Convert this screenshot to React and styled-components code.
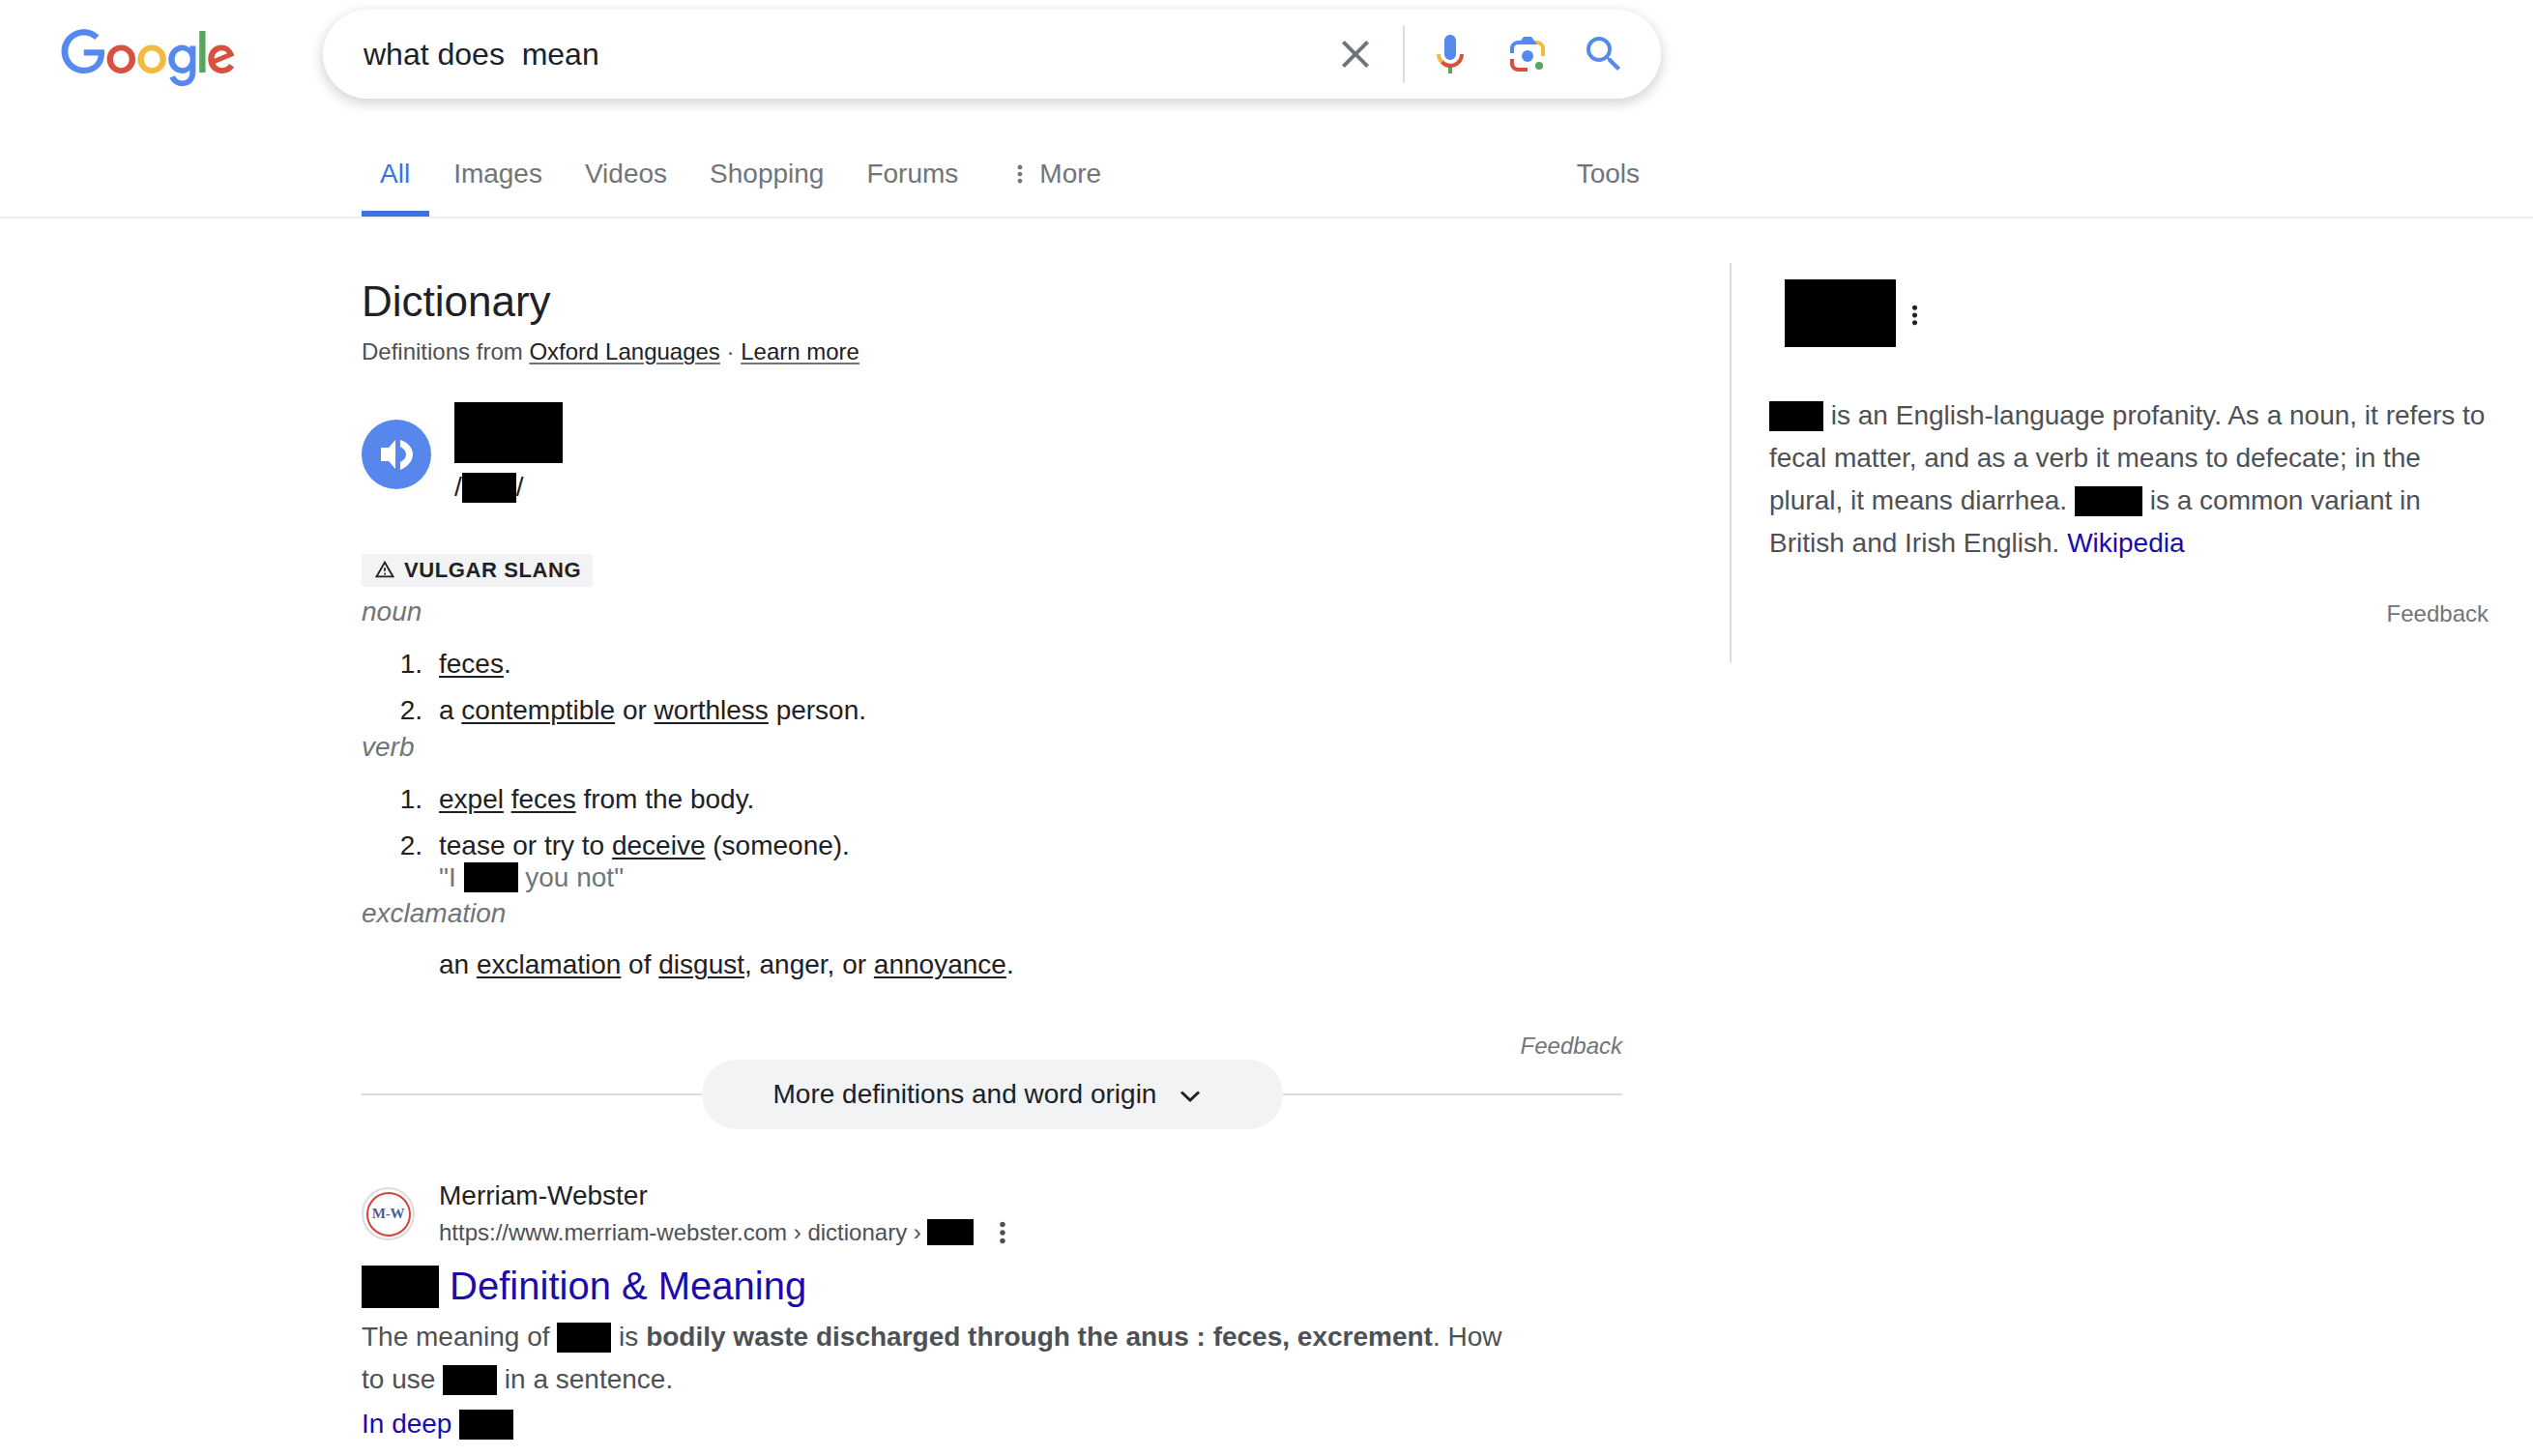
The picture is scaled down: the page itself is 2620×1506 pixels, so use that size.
import React from "react";
import styled, { createGlobalStyle } from "styled-components";

const GlobalStyle = createGlobalStyle`
  html, body { margin: 0; padding: 0; background: #fff; }
  body { font-family: "Liberation Sans", Arial, sans-serif; color: #202124; width: 2620px; height: 1506px; overflow: hidden; }
  * { box-sizing: border-box; }
`;

const Page = styled.div`
  width: 2620px;
  height: 1506px;
  overflow: hidden;
  background: #fff;
`;

/* ---------- header ---------- */
const Header = styled.header`
  display: flex;
  align-items: flex-start;
  gap: 90px;
  padding: 10px 0 0 63px;
`;
const LogoSvg = styled.svg`
  display: block;
  width: 181px;
  height: 61px;
  margin-top: 20px;
`;
const SearchBar = styled.div`
  display: flex;
  align-items: center;
  width: 1384px;
  height: 92px;
  padding: 0 35px 0 42px;
  border-radius: 46px;
  background: #fff;
  box-shadow: 0 4px 12px 2px rgba(64, 60, 67, 0.2);
`;
const Query = styled.div`
  flex: 1;
  font-size: 32px;
  line-height: 38px;
  white-space: pre;
  color: #202124;
`;
const BarIcon = styled.svg`
  display: block;
  flex: none;
  width: 48px;
  height: 48px;
  margin-left: ${(p) => p.$gap || 0}px;
`;
const BarDivider = styled.div`
  flex: none;
  width: 2px;
  height: 58px;
  margin-left: 25px;
  background: #dadce0;
`;

/* ---------- tabs ---------- */
const Nav = styled.nav`
  margin-top: 34px;
  padding-left: 374px;
  border-bottom: 2px solid #ebebeb;
`;
const TabRow = styled.div`
  display: flex;
  gap: 6px;
  width: 1341px;
`;
const Tab = styled.a`
  display: flex;
  align-items: center;
  gap: ${(p) => (p.$hasIcon ? 17 : 0)}px;
  height: 88px;
  padding: 6px ${(p) => (p.$active ? 20 : 19)}px 0 19px;
  margin-left: ${(p) => (p.$end ? "auto" : p.$hasIcon ? "17px" : "0")};
  border-bottom: 6px solid ${(p) => (p.$active ? "#3a74df" : "transparent")};
  font-size: 28px;
  line-height: 32px;
  color: ${(p) => (p.$active ? "#3a74df" : "#70757a")};
`;

/* ---------- main ---------- */
const Main = styled.main`
  display: flex;
  align-items: flex-start;
  gap: 111px;
  padding: 46px 0 0 374px;
`;
const LeftColumn = styled.div`
  flex: none;
  width: 1304px;
  padding-top: 14px;
`;
const DictTitle = styled.h2`
  margin: 0;
  font-size: 44px;
  line-height: 52px;
  font-weight: 400;
  color: #202124;
`;
const Source = styled.div`
  margin-top: 10px;
  font-size: 24px;
  line-height: 32px;
  color: #4d5156;
`;
const SourceLink = styled.a`
  color: #202124;
  text-decoration: underline;
  text-decoration-color: #70757a;
  text-decoration-thickness: 2px;
  text-underline-offset: 3px;
`;
const Redact = styled.span`
  display: ${(p) => (p.$block ? "block" : "inline-block")};
  width: ${(p) => p.$w}px;
  height: ${(p) => p.$h}px;
  background: #000;
  vertical-align: ${(p) => -p.$drop}px;
`;
const WordHead = styled.div`
  display: flex;
  align-items: flex-start;
  gap: 24px;
  margin-top: 36px;
`;
const SpeakerButton = styled.div`
  flex: none;
  width: 72px;
  height: 72px;
  margin-top: 18px;
  border-radius: 50%;
  background: #5787ec;
`;
const SpeakerSvg = styled.svg`
  display: block;
  width: 72px;
  height: 72px;
`;
const WordText = styled.div`
  display: flex;
  flex-direction: column;
  gap: 8px;
`;
const Phonetic = styled.div`
  font-size: 28px;
  line-height: 34px;
  color: #202124;
`;
const Badge = styled.div`
  display: flex;
  align-items: center;
  gap: 9px;
  width: 239px;
  height: 34px;
  margin-top: 52px;
  padding-left: 13px;
  border-radius: 4px;
  background: #f1f3f4;
  font-size: 22px;
  font-weight: 700;
  letter-spacing: 0.6px;
  color: #202124;
`;
const BadgeIcon = styled.svg`
  display: block;
  flex: none;
  width: 22px;
  height: 22px;
  margin-top: -2px;
`;
const Pos = styled.div`
  margin-top: ${(p) => p.$top}px;
  font-size: 28px;
  line-height: 34px;
  font-style: italic;
  color: #70757a;
`;
const Sense = styled.div`
  display: flex;
  gap: 17px;
  margin-top: ${(p) => p.$top}px;
  font-size: 28px;
  line-height: 36px;
  color: #202124;
`;
const SenseNum = styled.div`
  flex: none;
  width: 63px;
  text-align: right;
`;
const Word = styled.a`
  color: #202124;
  text-decoration: underline;
  text-decoration-thickness: 2px;
  text-underline-offset: 3px;
`;
const Quote = styled.div`
  height: 30px;
  margin-top: -1px;
  font-size: 28px;
  line-height: 30px;
  color: #70757a;
`;
const DictFeedback = styled.div`
  margin-top: 52px;
  font-size: 24px;
  line-height: 28px;
  font-style: italic;
  text-align: right;
  color: #70757a;
`;
const MoreRow = styled.div`
  display: flex;
  align-items: center;
`;
const Rule = styled.div`
  flex: 1;
  height: 2px;
  background: #dadce0;
`;
const MorePill = styled.div`
  display: flex;
  align-items: center;
  justify-content: center;
  gap: 24px;
  flex: none;
  width: 601px;
  height: 72px;
  padding-right: 10px;
  border-radius: 36px;
  background: #f1f3f4;
  font-size: 28px;
  line-height: 34px;
  color: #202124;
`;
const Chevron = styled.svg`
  display: block;
  flex: none;
  width: 22px;
  height: 14px;
  margin-top: 3px;
`;

/* ---------- web result ---------- */
const Result = styled.article`
  margin-top: 52px;
`;
const ResultHead = styled.div`
  display: flex;
  align-items: flex-start;
  gap: 25px;
`;
const Favicon = styled.div`
  display: flex;
  align-items: center;
  justify-content: center;
  flex: none;
  width: 55px;
  height: 55px;
  margin-top: 8px;
  border: 2px solid #dadce0;
  border-radius: 50%;
  background: #fff;
`;
const FaviconRing = styled.div`
  display: flex;
  align-items: center;
  justify-content: center;
  flex: none;
  width: 46px;
  height: 46px;
  border: 2px solid #d3423c;
  border-radius: 50%;
  font-family: "Liberation Serif", serif;
  font-weight: 700;
  font-size: 15px;
  letter-spacing: -0.3px;
  color: #3f5f9f;
`;
const SiteName = styled.div`
  font-size: 28px;
  line-height: 34px;
  color: #202124;
`;
const UrlRow = styled.div`
  display: flex;
  align-items: center;
  gap: 26px;
  margin-top: 5px;
  font-size: 24px;
  line-height: 32px;
  color: #4d5156;
`;
const UrlText = styled.div`
  white-space: pre;
`;
const Dots = styled.svg`
  display: block;
  flex: none;
  margin-top: ${(p) => p.$shift || 0}px;
`;
const ResultTitle = styled.h3`
  margin: 13px 0 0;
  font-size: 40px;
  line-height: 52px;
  font-weight: 400;
  color: #1a0dab;
`;
const Snippet = styled.p`
  width: 1200px;
  margin: 5px 0 0;
  font-size: 28px;
  line-height: 44px;
  color: #4d5156;
`;
const DeepLink = styled.a`
  display: block;
  margin-top: 2px;
  font-size: 28px;
  line-height: 44px;
  color: #1a0dab;
`;

/* ---------- knowledge panel ---------- */
const SidePanel = styled.aside`
  flex: none;
  width: 785px;
  padding: 17px 0 37px 39px;
  border-left: 2px solid #dadce0;
`;
const SideHead = styled.div`
  display: flex;
  align-items: center;
  gap: 16px;
  padding-left: 16px;
`;
const SideText = styled.p`
  width: 743px;
  margin: 49px 0 0;
  font-size: 28px;
  line-height: 44px;
  color: #4d5156;
`;
const SideLink = styled.a`
  color: #1a0dab;
`;
const SideFeedback = styled.div`
  width: 744px;
  margin-top: 37px;
  font-size: 24px;
  line-height: 28px;
  text-align: right;
  color: #70757a;
`;

const MoreDots = ({ w, h, color, shift }) => (
  <Dots $shift={shift} width={w} height={h} viewBox="9.5 3.5 5 17" preserveAspectRatio="xMidYMid meet" fill={color}>
    <path d="M12 8c1.1 0 2-.9 2-2s-.9-2-2-2-2 .9-2 2 .9 2 2 2zm0 2c-1.1 0-2 .9-2 2s.9 2 2 2 2-.9 2-2-.9-2-2-2zm0 6c-1.1 0-2 .9-2 2s.9 2 2 2 2-.9 2-2-.9-2-2-2z" />
  </Dots>
);

const GoogleLogo = () => (
  <LogoSvg viewBox="0 0 272 92" aria-label="Google">
    <path fill="#D8503E" d="M115.75 47.18c0 12.77-9.99 22.18-22.25 22.18s-22.25-9.41-22.25-22.18C71.25 34.32 81.24 25 93.5 25s22.25 9.32 22.25 22.18zm-9.74 0c0-7.98-5.79-13.44-12.51-13.44S80.99 39.2 80.99 47.18c0 7.9 5.79 13.44 12.51 13.44s12.51-5.55 12.51-13.44z" />
    <path fill="#F4BA40" d="M163.75 47.18c0 12.77-9.99 22.18-22.25 22.18s-22.25-9.41-22.25-22.18c0-12.85 9.99-22.18 22.25-22.18s22.25 9.32 22.25 22.18zm-9.74 0c0-7.98-5.79-13.44-12.51-13.44s-12.51 5.46-12.51 13.44c0 7.9 5.79 13.44 12.51 13.44s12.51-5.55 12.51-13.44z" />
    <path fill="#5689EE" d="M209.75 26.34v39.82c0 16.38-9.66 23.07-21.08 23.07-10.75 0-17.22-7.19-19.66-13.07l8.48-3.53c1.51 3.61 5.21 7.87 11.17 7.87 7.31 0 11.84-4.51 11.84-13v-3.19h-.34c-2.18 2.69-6.38 5.04-11.68 5.04-11.09 0-21.25-9.66-21.25-22.09 0-12.52 10.16-22.26 21.25-22.26 5.29 0 9.49 2.35 11.68 4.96h.34v-3.61h9.25zm-8.56 20.92c0-7.81-5.21-13.52-11.84-13.52-6.72 0-12.35 5.71-12.35 13.52 0 7.73 5.63 13.36 12.35 13.36 6.63 0 11.84-5.63 11.84-13.36z" />
    <path fill="#57A65E" d="M225 3v65h-9.5V3h9.5z" />
    <path fill="#D8503E" d="M262.02 54.48l7.56 5.04c-2.44 3.61-8.32 9.83-18.48 9.83-12.6 0-22.01-9.74-22.01-22.18 0-13.19 9.49-22.18 20.92-22.18 11.51 0 17.14 9.16 18.98 14.11l1.01 2.52-29.65 12.28c2.27 4.45 5.8 6.72 10.75 6.72 4.96 0 8.4-2.44 10.92-6.14zm-23.27-7.98l19.82-8.23c-1.09-2.77-4.37-4.7-8.23-4.7-4.95 0-11.84 4.37-11.59 12.93z" />
    <path fill="#5689EE" d="M35.29 41.41V32H67c.31 1.64.47 3.58.47 5.68 0 7.06-1.93 15.79-8.15 22.01-6.05 6.3-13.78 9.66-24.02 9.66C16.32 69.35.36 53.89.36 34.91.36 15.93 16.32.47 35.3.47c10.5 0 17.98 4.12 23.6 9.49l-6.64 6.64c-4.03-3.78-9.49-6.72-16.97-6.72-13.86 0-24.7 11.17-24.7 25.03 0 13.86 10.84 25.03 24.7 25.03 8.99 0 14.11-3.61 17.39-6.89 2.66-2.66 4.41-6.46 5.1-11.65l-22.49.01z" />
  </LogoSvg>
);

export default function App() {
  return (
    <Page>
      <GlobalStyle />
      <Header>
        <GoogleLogo />
        <SearchBar>
          <Query>{"what does  mean"}</Query>
          <BarIcon viewBox="0 0 24 24" fill="#70757a">
            <path d="M19 6.41L17.59 5 12 10.59 6.41 5 5 6.41 10.59 12 5 17.59 6.41 19 12 13.41 17.59 19 19 17.59 13.41 12z" />
          </BarIcon>
          <BarDivider />
          <BarIcon $gap={23} viewBox="0 0 24 24">
            <path fill="#5689EE" d="m12 15c1.66 0 3-1.31 3-2.97v-7.02c0-1.66-1.34-3.01-3-3.01s-3 1.34-3 3.01v7.02c0 1.66 1.34 2.97 3 2.97z" />
            <path fill="#57A65E" d="m11 18.08h2v3.92h-2z" />
            <path fill="#F4BA40" d="m7.05 16.87c-1.27-1.33-2.05-2.83-2.05-4.87h2c0 1.45 0.56 2.42 1.47 3.38v0.32l-1.15 1.18z" />
            <path fill="#D8503E" d="m12 16.93a4.97 5.25 0 0 1 -3.54 -1.55l-1.41 1.49c1.26 1.34 3.02 2.13 4.95 2.13 3.87 0 6.99-2.92 6.99-6.99h-1.99c0 2.92-2.24 4.93-5 4.93z" />
          </BarIcon>
          <BarIcon $gap={32} viewBox="0 0 192 192">
            <circle fill="#57A65E" cx="144.07" cy="144" r="16" />
            <circle fill="#5689EE" cx="96.07" cy="104" r="24" />
            <path fill="#D8503E" d="M24,135.2c0,18.11,14.69,32.8,32.8,32.8H96v-16l-40.1-0.1c-8.8,0-15.9-8.19-15.9-17.9v-18H24V135.2z" />
            <path fill="#F4BA40" d="M168,72.8c0-18.11-14.69-32.8-32.8-32.8H116l20,16c8.8,0,16,8.29,16,18v30h16V72.8z" />
            <path fill="#5689EE" d="M112,24l-32,0L68,40H56.8C38.69,40,24,54.69,24,72.8V92h16V74c0-9.71,7.2-18,16-18h80L112,24z" />
          </BarIcon>
          <BarIcon $gap={31} viewBox="0 0 24 24" fill="#5689EE">
            <path d="M15.5 14h-.79l-.28-.27A6.471 6.471 0 0 0 16 9.5 6.5 6.5 0 1 0 9.5 16c1.61 0 3.09-.59 4.23-1.57l.27.28v.79l5 4.99L20.49 19l-4.99-5zm-6 0C7.01 14 5 11.99 5 9.5S7.01 5 9.5 5 14 7.01 14 9.5 11.99 14 9.5 14z" />
          </BarIcon>
        </SearchBar>
      </Header>

      <Nav>
        <TabRow>
          <Tab $active>All</Tab>
          <Tab>Images</Tab>
          <Tab>Videos</Tab>
          <Tab>Shopping</Tab>
          <Tab>Forums</Tab>
          <Tab $hasIcon>
            <MoreDots w={6} h={20} color="#70757a" />
            More
          </Tab>
          <Tab $end>Tools</Tab>
        </TabRow>
      </Nav>

      <Main>
        <LeftColumn>
          <DictTitle>Dictionary</DictTitle>
          <Source>
            Definitions from <SourceLink>Oxford Languages</SourceLink> · <SourceLink>Learn more</SourceLink>
          </Source>

          <WordHead>
            <SpeakerButton>
              <SpeakerSvg viewBox="0 0 72 72" fill="#fff">
                <path d="M20 29H28L35 21V51L28 43H20Z" />
                <path d="M40 21C49 24 53 30 53 36C53 42 49 48 40 52V44C44 42 46 39 46 36C46 33 44 30 40 28Z" />
              </SpeakerSvg>
            </SpeakerButton>
            <WordText>
              <Redact $block $w={112} $h={63} />
              <Phonetic>
                /<Redact $w={56} $h={31} $drop={7} />/
              </Phonetic>
            </WordText>
          </WordHead>

          <Badge>
            <BadgeIcon viewBox="0 0 24 24" fill="#202124">
              <path d="M1 21h22L12 2 1 21zm3.47-2L12 5.99 19.53 19H4.47zM11 16h2v2h-2zm0-6h2v4h-2z" />
            </BadgeIcon>
            VULGAR SLANG
          </Badge>

          <Pos $top={9}>noun</Pos>
          <Sense $top={19}>
            <SenseNum>1.</SenseNum>
            <div><Word>feces</Word>.</div>
          </Sense>
          <Sense $top={12}>
            <SenseNum>2.</SenseNum>
            <div>a <Word>contemptible</Word> or <Word>worthless</Word> person.</div>
          </Sense>

          <Pos $top={3}>verb</Pos>
          <Sense $top={19}>
            <SenseNum>1.</SenseNum>
            <div><Word>expel</Word> <Word>feces</Word> from the body.</div>
          </Sense>
          <Sense $top={12}>
            <SenseNum>2.</SenseNum>
            <div>
              tease or try to <Word>deceive</Word> (someone).
              <Quote>"I <Redact $w={56} $h={31} $drop={6} /> you not"</Quote>
            </div>
          </Sense>

          <Pos $top={6}>exclamation</Pos>
          <Sense $top={18}>
            <SenseNum />
            <div>an <Word>exclamation</Word> of <Word>disgust</Word>, anger, or <Word>annoyance</Word>.</div>
          </Sense>

          <DictFeedback>Feedback</DictFeedback>
          <MoreRow>
            <Rule />
            <MorePill>
              More definitions and word origin
              <Chevron viewBox="0 0 22 14" fill="none" stroke="#202124" strokeWidth="3">
                <path d="M2 2.5 L11 11 L20 2.5" />
              </Chevron>
            </MorePill>
            <Rule />
          </MoreRow>

          <Result>
            <ResultHead>
              <Favicon>
                <FaviconRing>M-W</FaviconRing>
              </Favicon>
              <div>
                <SiteName>Merriam-Webster</SiteName>
                <UrlRow>
                  <UrlText>
                    {"https://www.merriam-webster.com › dictionary › "}
                    <Redact $w={48} $h={27} $drop={5} />
                  </UrlText>
                  <MoreDots w={8} h={24} color="#4d5156" />
                </UrlRow>
              </div>
            </ResultHead>
            <ResultTitle>
              <Redact $w={80} $h={44} $drop={9} /> Definition &amp; Meaning
            </ResultTitle>
            <Snippet>
              The meaning of <Redact $w={56} $h={31} $drop={7} /> is <b>bodily waste discharged through the anus : feces, excrement</b>. How to use <Redact $w={56} $h={31} $drop={7} /> in a sentence.
            </Snippet>
            <DeepLink>
              In deep <Redact $w={56} $h={31} $drop={7} />
            </DeepLink>
          </Result>
        </LeftColumn>

        <SidePanel>
          <SideHead>
            <Redact $block $w={115} $h={70} />
            <MoreDots w={7} h={22} color="#202124" shift={4} />
          </SideHead>
          <SideText>
            <Redact $w={56} $h={31} $drop={7} /> is an English-language profanity. As a noun, it refers to fecal matter, and as a verb it means to defecate; in the plural, it means diarrhea. <Redact $w={70} $h={31} $drop={7} /> is a common variant in British and Irish English. <SideLink>Wikipedia</SideLink>
          </SideText>
          <SideFeedback>Feedback</SideFeedback>
        </SidePanel>
      </Main>
    </Page>
  );
}
